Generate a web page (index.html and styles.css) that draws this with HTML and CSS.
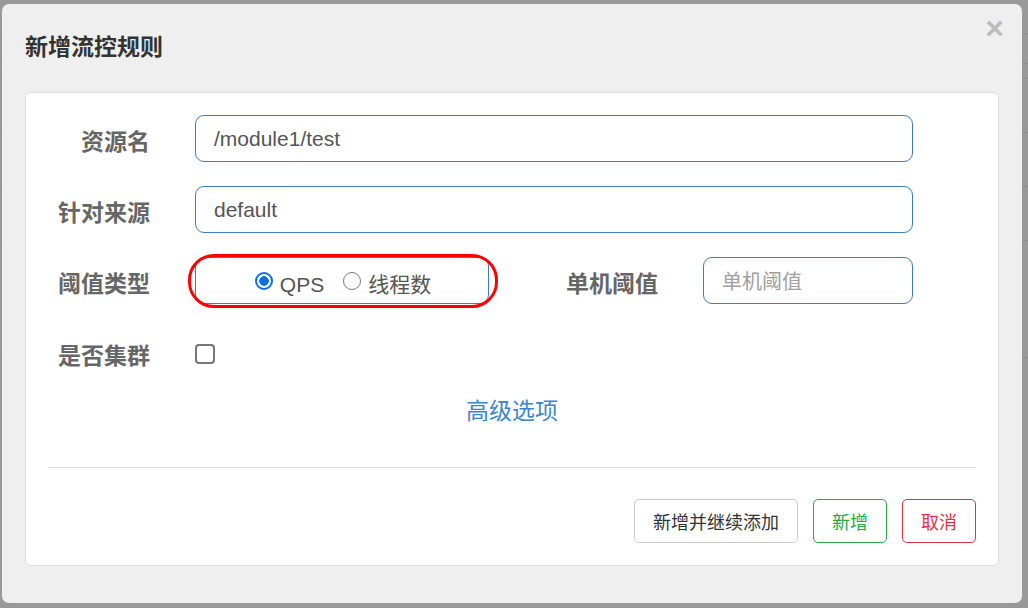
FILE: index.html
```html
<!DOCTYPE html>
<html lang="zh-CN">
<head>
<meta charset="utf-8">
<title>新增流控规则</title>
<link rel="stylesheet" href="styles.css">
</head>
<body>
<div class="modal">
  <div class="modal-header">
    <h3 class="modal-title">新增流控规则</h3>
    <span class="close">×</span>
  </div>
  <div class="card">
    <div class="form-row">
      <label class="label">资源名</label>
      <div class="input wide">/module1/test</div>
    </div>
    <div class="form-row">
      <label class="label">针对来源</label>
      <div class="input wide">default</div>
    </div>
    <div class="form-row">
      <label class="label">阈值类型</label>
      <div class="radio-box">
        <span class="radio checked"></span><span class="radio-text">QPS</span>
        <span class="radio"></span><span class="radio-text cjk">线程数</span>
        <span class="highlight"></span>
      </div>
      <label class="label label-mid">单机阈值</label>
      <div class="input small placeholder">单机阈值</div>
    </div>
    <div class="form-row row-check">
      <label class="label">是否集群</label>
      <span class="checkbox"></span>
    </div>
    <div class="advanced">高级选项</div>
    <div class="divider"></div>
    <div class="buttons">
      <button class="btn btn-default">新增并继续添加</button>
      <button class="btn btn-success">新增</button>
      <button class="btn btn-danger">取消</button>
    </div>
  </div>
</div>
</body>
</html>
```

FILE: styles.css
```css
* { box-sizing: border-box; }
html, body { margin: 0; padding: 0; }
body {
  width: 1028px;
  height: 608px;
  overflow: hidden;
  background-color: #999;
  background-image:
    linear-gradient(#8c8c8c, #8c8c8c),
    linear-gradient(#8c8c8c, #8c8c8c),
    linear-gradient(#8c8c8c, #8c8c8c),
    linear-gradient(#8c8c8c, #8c8c8c),
    linear-gradient(#8c8c8c, #8c8c8c),
    linear-gradient(#8c8c8c, #8c8c8c),
    linear-gradient(#8c8c8c, #8c8c8c);
  background-size: 100% 1px;
  background-repeat: no-repeat;
  background-position: 0 33px, 0 63px, 0 132px, 0 186px, 0 240px, 0 357px, 0 78px;
  padding: 4px 6px 5px 2px;
  font-family: "Liberation Sans", "Noto Sans CJK SC", sans-serif;
}
.modal {
  position: relative;
  height: 599px;
  background: #efefef;
  border-radius: 7px;
  padding: 25px 23px 0 23px;
}
.modal-header {
  height: 63px;
}
.modal-title {
  margin: 0;
  font-family: "Noto Sans CJK SC", sans-serif;
  font-size: 23px;
  line-height: 32px;
  font-weight: 700;
  color: #333;
}
.close {
  position: absolute;
  top: 7px;
  right: 18px;
  font-size: 32px;
  line-height: 34px;
  font-weight: 700;
  color: #bcbcbc;
}
.card {
  background: #fff;
  border: 1px solid #dcdcdc;
  border-radius: 6px;
  height: 474px;
  padding: 22px 22px 0 0;
  display: flex;
  flex-direction: column;
}
.form-row {
  display: flex;
  align-items: center;
  height: 47px;
  margin-bottom: 24px;
}
.label {
  width: 124px;
  margin-right: 45px;
  text-align: right;
  font-family: "Noto Sans CJK SC", sans-serif;
  font-size: 23px;
  font-weight: 700;
  color: #666;
  line-height: 30px;
  padding-top: 2px;
}
.input {
  height: 47px;
  border: 1px solid #3b7dc0;
  border-radius: 9px;
  padding: 0 18px;
  font-size: 21px;
  line-height: 45px;
  color: #555;
}
.wide { width: 718px; }
.small { width: 210px; }
.placeholder {
  color: #a0a0a0;
  font-family: "Noto Sans CJK SC", sans-serif;
  font-size: 20px;
}
.radio-box {
  position: relative;
  width: 294px;
  height: 47px;
  border: 1px solid #3b7dc0;
  border-radius: 9px;
  display: flex;
  align-items: center;
  justify-content: center;
  padding-top: 4px;
  padding-left: 2px;
}
.radio {
  width: 18px;
  height: 18px;
  border-radius: 50%;
  border: 1.5px solid #767676;
  background: #fff;
  margin-right: 7px;
  margin-top: -3px;
}
.radio.checked {
  border: 2px solid #0b6fe6;
  background: radial-gradient(circle, #0b6fe6 0 4.5px, #fff 5px);
}
.radio-text {
  font-family: "Liberation Sans", sans-serif;
  font-size: 21px;
  line-height: 26px;
  height: 26px;
  color: #555;
  margin-right: 19px;
  padding-top: 2px;
}
.radio-text.cjk {
  font-family: "Noto Sans CJK SC", sans-serif;
  margin-right: 0;
  padding-top: 0;
}
.highlight {
  position: absolute;
  left: -8px;
  top: -4px;
  width: 310px;
  height: 54px;
  border: 3px solid #f00;
  border-radius: 26px;
  pointer-events: none;
}
.label-mid {
  width: 169px;
}
.row-check {
  margin-bottom: 0;
  margin-top: 2px;
}
.row-check .label { padding-top: 0; }
.checkbox {
  width: 20px;
  height: 20px;
  border: 2px solid #767676;
  border-radius: 4px;
  margin-top: 0;
}
.advanced {
  text-align: center;
  margin-top: 16px;
  padding-left: 22px;
  font-family: "Noto Sans CJK SC", sans-serif;
  font-size: 23px;
  line-height: 32px;
  color: #3a86cc;
}
.divider {
  margin: 42px 0 0 22px;
  height: 1px;
  background: #ddd;
}
.buttons {
  display: flex;
  justify-content: flex-end;
  gap: 15px;
  margin-top: 31px;
}
.btn {
  height: 44px;
  padding: 0 18px;
  background: #fff;
  border: 1px solid #ccc;
  border-radius: 5px;
  font-family: "Noto Sans CJK SC", sans-serif;
  font-size: 18px;
  line-height: 42px;
  color: #333;
}
.btn-default { width: 164px; }
.btn-success { width: 74px; border-color: #28a745; color: #28a745; padding: 0; }
.btn-danger { width: 74px; border-color: #dc3545; color: #dc3545; padding: 0; }
```
